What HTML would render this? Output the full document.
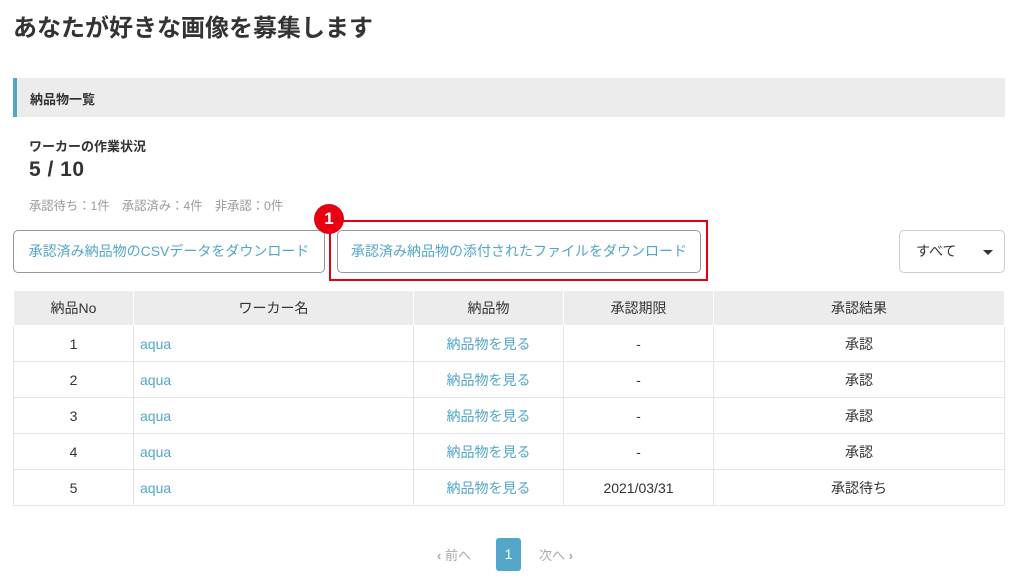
<!DOCTYPE html><html><head><meta charset="utf-8"><style>
*{box-sizing:border-box;margin:0;padding:0}
body{width:1017px;height:587px;background:#fff;font-family:"Liberation Sans","Noto Sans CJK JP",sans-serif;color:#333;position:relative;overflow:hidden}
.a{position:absolute}
h1{position:absolute;left:13px;top:8px;font-size:24px;font-weight:bold;color:#333}
.bar{left:13px;top:78px;width:992px;height:39px;background:#ececec;border-left:4px solid #52a6c8;font-size:13px;font-weight:bold;padding:11px 0 0 13px}
.btn{position:absolute;top:230px;height:43px;border:1px solid #999;border-radius:5px;color:#52a6c8;font-size:14px;text-align:center;line-height:41px}
table{position:absolute;left:13px;top:290px;width:992px;border-collapse:collapse;font-size:14px}
td,th{border:1px solid #e5e5e5;height:36px;padding:0;text-align:center;font-weight:normal}
th{background:#ececec;border-color:#fff;height:35px}
td.l{text-align:left;padding-left:6px;color:#52a6c8}
.lk{color:#52a6c8}
</style></head><body>
<h1>あなたが好きな画像を募集します</h1>
<div class="a bar">納品物一覧</div>
<div class="a" style="left:29px;top:136px;font-size:13px;font-weight:bold">ワーカーの作業状況</div>
<div class="a" style="left:29px;top:158px;font-size:21px;font-weight:bold;letter-spacing:0.5px">5 / 10</div>
<div class="a" style="left:29px;top:196px;font-size:12.3px;color:#999">承認待ち：1件　承認済み：4件　非承認：0件</div>
<div class="btn" style="left:13px;width:312px">承認済み納品物のCSVデータをダウンロード</div>
<div class="btn" style="left:337px;width:364px">承認済み納品物の添付されたファイルをダウンロード</div>
<div class="a" style="left:329px;top:220px;width:379px;height:61px;border:2px solid #e60012"></div>
<div class="a" style="left:314px;top:204px;width:30px;height:30px;border-radius:50%;background:#e60012;color:#fff;font-weight:bold;font-size:17px;text-align:center;line-height:30px">1</div>
<div class="btn" style="left:899px;width:106px;color:#333;border-color:#ccc;text-align:left;padding-left:16px">すべて<span class="a" style="right:11px;top:19px;border-left:5px solid transparent;border-right:5px solid transparent;border-top:5px solid #333"></span></div>
<table>
<tr><th style="width:120px">納品No</th><th style="width:280px">ワーカー名</th><th style="width:150px">納品物</th><th style="width:150px">承認期限</th><th>承認結果</th></tr>
<tr><td>1</td><td class="l">aqua</td><td class="lk">納品物を見る</td><td>-</td><td>承認</td></tr>
<tr><td>2</td><td class="l">aqua</td><td class="lk">納品物を見る</td><td>-</td><td>承認</td></tr>
<tr><td>3</td><td class="l">aqua</td><td class="lk">納品物を見る</td><td>-</td><td>承認</td></tr>
<tr><td>4</td><td class="l">aqua</td><td class="lk">納品物を見る</td><td>-</td><td>承認</td></tr>
<tr><td>5</td><td class="l">aqua</td><td class="lk">納品物を見る</td><td>2021/03/31</td><td>承認待ち</td></tr>
</table>
<div class="a" style="left:437px;top:545px;font-size:13px;color:#aaa"><b>‹</b> 前へ</div>
<div class="a" style="left:496px;top:538px;width:25px;height:33px;background:#52a6c8;border-radius:3px;color:#fff;font-size:14px;text-align:center;line-height:33px">1</div>
<div class="a" style="left:539px;top:545px;font-size:13px;color:#aaa">次へ <b>›</b></div>
</body></html>
